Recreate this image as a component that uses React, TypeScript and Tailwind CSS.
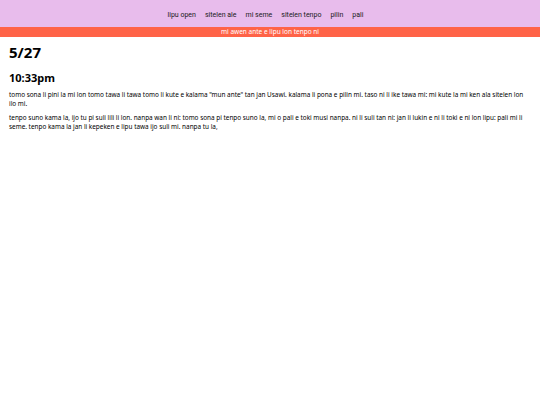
const navItems = ['lipu open', 'sitelen ale', 'mi seme', 'sitelen tenpo', 'pilin', 'pali'];

export default function App() {
  return (
    <div className="min-h-[405px] w-[540px] bg-white text-black font-['Noto_Sans',sans-serif]">
      <header className="bg-[#e8bcec]">
        <nav className="flex h-[27px] items-center justify-center pt-[3px] font-['Roboto',sans-serif] text-[7px] text-[#1a1a1a]">
          {navItems.map((item) => (
            <span key={item} className="mr-[9px]">
              {item}
            </span>
          ))}
        </nav>
        <div className="bg-[#ff6347] py-[1px] text-center text-[6.5px] leading-[8px] text-white">
          mi awen ante e lipu lon tenpo ni
        </div>
      </header>

      <main className="px-[9px] pt-[5px]">
        <h1 className="text-[15px] font-bold leading-[20px]">5/27</h1>
        <h2 className="mt-[8px] text-[11px] font-bold leading-[16px]">10:33pm</h2>
        <div className="mt-[5px] space-y-[6px] text-[6.4px] leading-[8.5px]">
          <p>
            tomo sona li pini la mi lon tomo tawa li tawa tomo li kute e kalama "mun ante" tan jan Usawi. kalama li pona e pilin mi. taso ni li ike tawa mi: mi kute la mi ken ala sitelen lon ilo mi.
          </p>
          <p>
            tenpo suno kama la, ijo tu pi suli lili li lon. nanpa wan li ni: tomo sona pi tenpo suno la, mi o pali e toki musi nanpa. ni li suli tan ni: jan li lukin e ni li toki e ni lon lipu: pali mi li seme. tenpo kama la jan li kepeken e lipu tawa ijo suli mi. nanpa tu la,
          </p>
        </div>
      </main>
    </div>
  );
}
